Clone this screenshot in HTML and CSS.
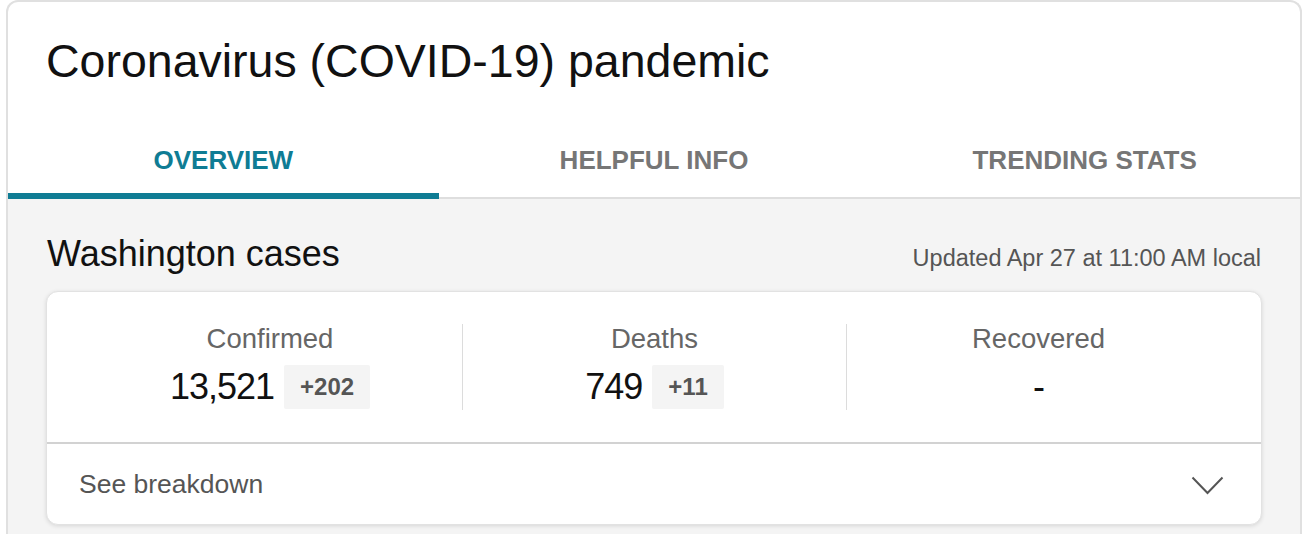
FILE: index.html
```html
<!DOCTYPE html>
<html lang="en">
<head>
<meta charset="utf-8">
<title>Coronavirus (COVID-19) pandemic</title>
<link rel="stylesheet" href="styles.css">
</head>
<body>
<div class="panel">
  <h1 class="panel-title">Coronavirus (COVID-19) pandemic</h1>
  <nav class="tabs">
    <div class="tab active">OVERVIEW</div>
    <div class="tab">HELPFUL INFO</div>
    <div class="tab">TRENDING STATS</div>
  </nav>
  <section class="content">
    <div class="section-head">
      <h2 class="section-title">Washington cases</h2>
      <div class="updated">Updated Apr 27 at 11:00 AM local</div>
    </div>
    <div class="card">
      <div class="stats">
        <div class="stat">
          <div class="stat-label">Confirmed</div>
          <div class="stat-row"><span class="stat-num">13,521</span><span class="badge">+202</span></div>
        </div>
        <div class="stat">
          <div class="stat-label">Deaths</div>
          <div class="stat-row"><span class="stat-num">749</span><span class="badge">+11</span></div>
        </div>
        <div class="stat">
          <div class="stat-label">Recovered</div>
          <div class="stat-row"><span class="stat-num">-</span></div>
        </div>
      </div>
      <div class="breakdown">
        <span>See breakdown</span>
        <svg class="chev" width="33" height="19" viewBox="0 0 33 19"><polyline points="1.5,1.5 16.5,17 31.5,1.5" fill="none" stroke="#555" stroke-width="2"/></svg>
      </div>
    </div>
  </section>
</div>
</body>
</html>
```
FILE: styles.css
```css
html, body {
  margin: 0;
  padding: 0;
  background: #fff;
}
body {
  font-family: "Liberation Sans", Arial, sans-serif;
  color: #111;
  padding: 0 10px 0 6px;
}
.panel {
  border: 2px solid #e0e0e0;
  border-bottom: none;
  border-radius: 12px 12px 0 0;
  background: #fff;
  overflow: hidden;
}
.panel-title {
  margin: 0;
  padding: 31px 0 0 38px;
  font-size: 46.5px;
  line-height: 56px;
  font-weight: 400;
  color: #111;
}
.tabs {
  display: grid;
  grid-template-columns: 1fr 1fr 1fr;
}
.tab {
  text-align: center;
  font-size: 26px;
  line-height: 30px;
  font-weight: 700;
  color: #767676;
  padding: 56px 0 22px;
  border-bottom: 2px solid #dedede;
}
.tab.active {
  color: #0f7c94;
  padding-bottom: 18px;
  border-bottom: 6px solid #0f7c94;
}
.content {
  background: #f4f4f4;
  padding: 34px 38px 20px;
}
.section-head {
  display: flex;
  justify-content: space-between;
  align-items: baseline;
  padding: 0 1px 0 1px;
}
.section-title {
  margin: 0;
  font-size: 36px;
  line-height: 42px;
  font-weight: 400;
  color: #111;
}
.updated {
  font-size: 23.5px;
  color: #555;
}
.card {
  margin-top: 16px;
  background: #fff;
  border: 1px solid #e2e2e2;
  border-radius: 12px;
  box-shadow: 0 1px 4px rgba(0,0,0,0.12);
}
.stats {
  display: grid;
  grid-template-columns: 1fr 1fr 1fr;
  padding: 32px 31px 32px;
}
.stat {
  height: 86px;
  text-align: center;
}
.stat + .stat {
  border-left: 1px solid #dcdcdc;
}
.stat-label {
  font-size: 27.5px;
  line-height: 30px;
  color: #666;
}
.stat-row {
  margin-top: 11px;
  display: flex;
  justify-content: center;
  align-items: center;
  height: 44px;
}
.stat-num {
  font-size: 36px;
  line-height: 44px;
  letter-spacing: -1px;
  color: #111;
}
.badge {
  margin-left: 10px;
  height: 44px;
  line-height: 44px;
  padding: 0 16px;
  background: #f4f4f4;
  border-radius: 2px;
  font-size: 24px;
  font-weight: 700;
  color: #555;
}
.breakdown {
  border-top: 2px solid #d2d2d2;
  height: 80px;
  display: flex;
  align-items: center;
  justify-content: space-between;
  padding: 0 37px 0 32px;
  font-size: 26.5px;
  color: #555;
}
.chev {
  display: block;
  margin-top: 2px;
}
```
